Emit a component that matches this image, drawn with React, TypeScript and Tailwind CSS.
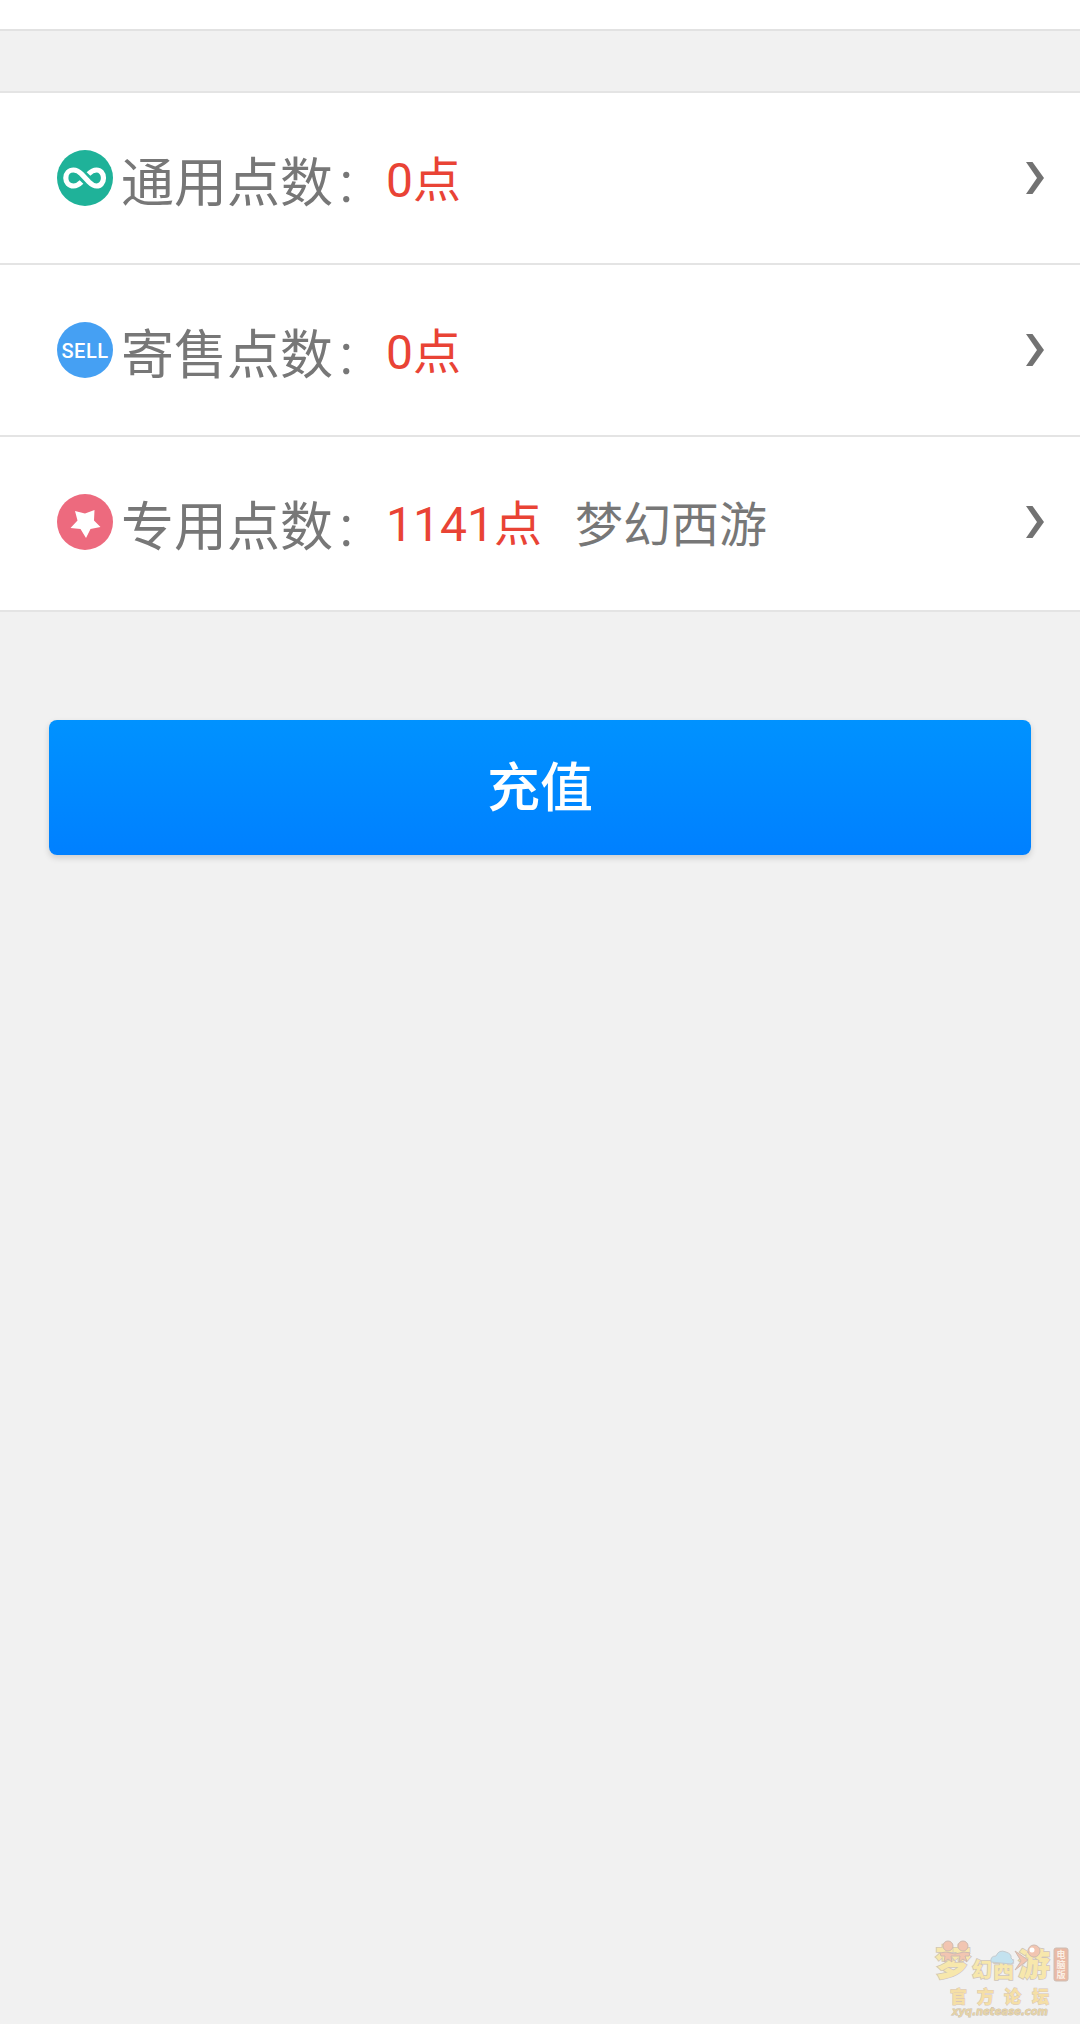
import React from "react";

interface PointRow {
  label: string;
  value: string;
  note?: string;
  icon: React.ReactNode;
}

function InfinityIcon() {
  return (
    <svg viewBox="0 0 56 56" className="size-14">
      <circle cx="28" cy="28" r="28" fill="#1fb299" />
      <path
        d="M24.500 32C21.500 35 19.500 36 16.500 36C12 36 8.800 32.500 8.800 28C8.800 23.500 12 20 16.500 20C20 20 22 21.500 24.500 24L32 32C34.500 34.500 36.500 36 39.500 36C43.500 36 46.500 32.500 46.500 28C46.500 23.500 43.500 20 39.500 20C36.500 20 34.500 21 31.500 24"
        fill="none"
        stroke="#fff"
        strokeWidth="5.200"
      />
    </svg>
  );
}

function SellIcon() {
  return (
    <span className="flex size-14 items-center justify-center rounded-full bg-[#45a0f3] pt-0.5 font-[Roboto] text-[20px] font-medium tracking-[0.5px] text-white">
      SELL
    </span>
  );
}

function StarIcon() {
  return (
    <svg viewBox="0 0 56 56" className="size-14">
      <circle cx="28" cy="28" r="28" fill="#ed6a7e" />
      <path
        d="M18 17L28 19.500L37.500 16L37 26.500L43.500 33L33.500 35L29 44L23.500 35L13.500 34L20.500 26.500Z"
        fill="#fff"
      />
    </svg>
  );
}

function Chevron() {
  return (
    <svg viewBox="0 0 18 32" className="mr-9 h-8 w-[18px]">
      <path d="M0 0H6.500L18 16L6.500 32H0L11 16Z" fill="#727272" />
    </svg>
  );
}

const rows: PointRow[] = [
  { label: "通用点数", value: "0点", icon: <InfinityIcon /> },
  { label: "寄售点数", value: "0点", icon: <SellIcon /> },
  { label: "专用点数", value: "1141点", note: "梦幻西游", icon: <StarIcon /> },
];

function Watermark() {
  return (
    <svg viewBox="0 0 160 100" className="h-[100px] w-40" fontFamily="'Noto Sans CJK SC', sans-serif">
      <g fontWeight="900" fill="#f7e7ac" stroke="#cfc4b8" strokeWidth="1.500" paintOrder="stroke">
        <text x="15" y="52" fontSize="36">梦</text>
        <text x="52" y="53" fontSize="20">幻</text>
        <text x="73" y="53" fontSize="21">西</text>
        <text x="98" y="52" fontSize="32">游</text>
      </g>
      {/* cloud and figures over the lettering */}
      <path d="M71 38Q70 32 76 32Q79 25 86 28Q92 30 91 34Q96 38 91 40Z" fill="#c3e2ef" stroke="#c3cbd0" />
      <g fill="#f2c5b1" stroke="#cfbab0">
        <circle cx="28" cy="22" r="5" />
        <circle cx="43" cy="22" r="5" />
        <path d="M20 29L26 28L35 30L44 28L50 29L49 32L45 32L47 38L43 35L39 38L40 32L31 32L32 38L28 35L24 38L25 32L21 32Z" />
        <circle cx="114" cy="27" r="6" />
        <path d="M95 27L108 36L95 46L101 37Z" />
      </g>
      <circle cx="112" cy="26" r="2.500" fill="#fff" />
      <rect x="134" y="24" width="14" height="33" rx="2" fill="#e9b9a5" stroke="#cdbdb3" />
      <g fontSize="9" fontWeight="700" fill="#fbf0e5" textAnchor="middle">
        <text x="141" y="34">电</text>
        <text x="141" y="44">脑</text>
        <text x="141" y="54">版</text>
      </g>
      <g fontSize="17" fontWeight="900" fill="#f5dfa6" stroke="#d8c6b8" strokeWidth="1" paintOrder="stroke">
        <text x="30" y="79">官</text>
        <text x="57" y="79">方</text>
        <text x="84" y="79">论</text>
        <text x="112" y="79">坛</text>
      </g>
      <text
        x="32"
        y="91"
        fontSize="11"
        fontWeight="700"
        fontStyle="italic"
        fontFamily="'DejaVu Sans', sans-serif"
        textLength="96"
        lengthAdjust="spacingAndGlyphs"
        fill="#e6d3a6"
        stroke="#c9bdad"
        strokeWidth="0.800"
        paintOrder="stroke"
      >
        xyq.netease.com
      </text>
    </svg>
  );
}

export default function App() {
  return (
    <div className="flex min-h-screen flex-col bg-[#f1f1f1] font-[Roboto,'Noto_Sans_CJK_SC',sans-serif]">
      <div className="h-[31px] border-b-2 border-[#e2e2e2] bg-white" />
      <ul className="mt-[60px] border-t-2 border-[#e4e4e4] text-[#777]">
        {rows.map((row) => (
          <li
            key={row.label}
            className="flex h-[172px] items-center border-b-2 border-[#e4e4e4] bg-white pl-[57px] last:h-[175px] last:pb-[3px]"
          >
            {row.icon}
            <span className="ml-2 flex w-[265px] whitespace-nowrap pt-[15px] text-[53px] leading-none">
              {row.label}
              <span className="ml-px text-[49px] font-light leading-[55px]">：</span>
            </span>
            <span className="whitespace-nowrap pt-1.5 text-[48px] leading-none text-[#e94335]">{row.value}</span>
            {row.note && <span className="ml-[33px] pt-2 text-[48px] leading-none">{row.note}</span>}
            <span className="ml-auto">
              <Chevron />
            </span>
          </li>
        ))}
      </ul>
      <button className="mx-[49px] mt-[108px] h-[135px] rounded-lg bg-linear-to-b from-[#0092ff] to-[#0080ff] pt-1 text-[53px] font-medium text-white shadow-[0_3px_6px_rgba(0,0,0,0.15)]">
        充值
      </button>
      <footer className="mt-auto flex justify-end">
        <Watermark />
      </footer>
    </div>
  );
}
